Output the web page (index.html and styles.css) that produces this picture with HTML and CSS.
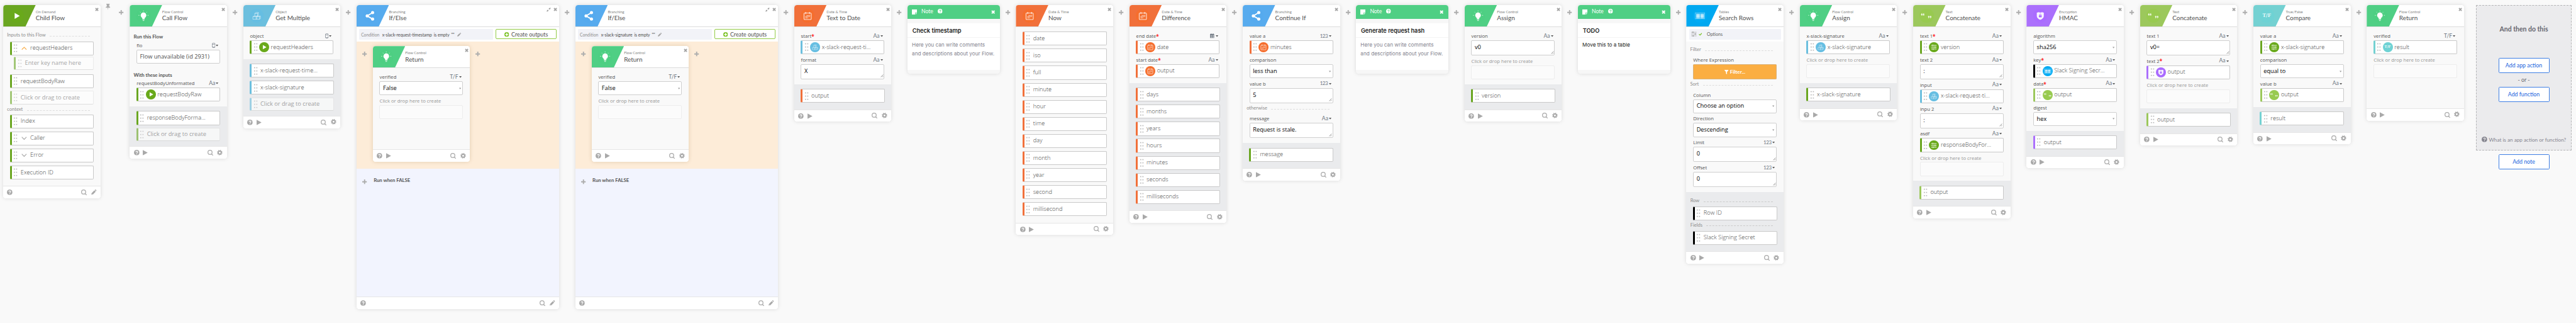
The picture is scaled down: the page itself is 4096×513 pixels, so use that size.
FILE: index.html
```html
<!DOCTYPE html>
<html lang="en">
<head>
<meta charset="utf-8">
<title>Flow editor</title>
<link rel="stylesheet" href="styles.css">
</head>
<body>
<svg class="defs" aria-hidden="true">
  <symbol id="x" viewBox="0 0 10 10"><path d="M1.600 1.600l6.800 6.800M8.400 1.600l-6.800 6.800" stroke="currentColor" stroke-width="3"/></symbol>
  <symbol id="plus" viewBox="0 0 11 11"><path d="M5.500 0v11M0 5.500h11" stroke="currentColor" stroke-width="2.800"/></symbol>
  <symbol id="pin" viewBox="0 0 11 15"><path d="M1.500 0h8v1.600L8.300 2.300v4c1.500.6 2.500 1.600 2.600 3H.1c.1-1.400 1.100-2.400 2.600-3v-4L1.500 1.600zM4.800 9h1.400l-.7 6z" fill="currentColor"/></symbol>
  <symbol id="q" viewBox="0 0 13 13"><circle cx="6.500" cy="6.500" r="6.500" fill="currentColor"/><path d="M4.500 5.200c0-2.800 4.300-2.600 4.200-.1 0 1.400-2.100 1.500-2.100 2.900M6.600 9.100v1.700" fill="none" stroke="var(--mark,#fff)" stroke-width="1.700"/></symbol>
  <symbol id="run" viewBox="0 0 12 13"><path d="M0 0l12 6.500L0 13z" fill="currentColor"/></symbol>
  <symbol id="search" viewBox="0 0 14 14"><g fill="none" stroke="currentColor" stroke-width="1.900"><circle cx="6" cy="6" r="5"/><path d="M9.600 9.800l3.700 3.600"/></g></symbol>
  <symbol id="gear" viewBox="0 0 13 13"><g fill="none" stroke="currentColor"><circle cx="6.500" cy="6.500" r="5.300" stroke-width="2.400" stroke-dasharray="2.082 2.082"/><circle cx="6.500" cy="6.500" r="3.500" stroke-width="2.700"/></g></symbol>
  <symbol id="pencil" viewBox="0 0 13 13"><path d="M0 13l.8-3.900 7-7 3.100 3.100-7 7zM8.600 1.300L9.900 0c.3-.2.700-.2 1 0L13 2.100c.2.300.2.700 0 1l-1.300 1.300z" fill="currentColor"/><circle cx="1.900" cy="11.100" r=".8" fill="#fff"/></symbol>
  <symbol id="compress" viewBox="0 0 12 12"><path d="M6.600 1.300l1 1L10.300 0 12 1.700 9.700 4.400l1 1H6.600zM5.400 10.700l-1-1L1.700 12 0 10.300l2.300-2.700-1-1h4.100z" fill="currentColor"/></symbol>
  <symbol id="db" viewBox="0 0 8 12"><g fill="none" stroke="currentColor" stroke-width="1"><path d="M.6 2.200v7.600c0 2.100 6.800 2.100 6.800 0V2.200"/><ellipse cx="4" cy="2.200" rx="3.400" ry="1.500"/><path d="M.6 9c0 1.500 6.800 1.500 6.800 0"/></g></symbol>
  <symbol id="cal" viewBox="0 0 10 11"><path d="M0 2h10v9H0z" fill="currentColor"/><path d="M1 5.200h8M1 7.200h8M1 9.200h8" stroke="#fff" stroke-width="1.100" stroke-dasharray="1.400 .8"/><path d="M2.700 0v3M7.300 0v3" stroke="currentColor" stroke-width="1.500"/></symbol>
  <symbol id="down" viewBox="0 0 6 4"><path d="M0 0h6L3 4z" fill="currentColor"/></symbol>
  <symbol id="grip" viewBox="0 0 7 7"><path d="M.5 6.800L6.800.5M4 6.800l2.800-2.800" stroke="currentColor" stroke-width=".9"/></symbol>
  <symbol id="chev-up" viewBox="0 0 13 8"><path d="M1 7l5.500-5.500L12 7" fill="none" stroke="currentColor" stroke-width="1.700"/></symbol>
  <symbol id="chev-down" viewBox="0 0 13 8"><path d="M1 1l5.500 5.500L12 1" fill="none" stroke="currentColor" stroke-width="1.700"/></symbol>
  <symbol id="create" viewBox="0 0 11 11"><circle cx="5.500" cy="5.500" r="5.500" fill="currentColor"/><path d="M5.500 2.300v6.400M2.300 5.500h6.400" stroke="#fff" stroke-width="2"/></symbol>
  <symbol id="options" viewBox="0 0 13 12"><path d="M0 1.800h13M0 6h13M0 10.200h13" stroke="currentColor" stroke-width="1"/><path d="M3 .3h2.500v3H3zM8.500 4.500H11v3H8.500zM3.500 8.700H6v3H3.500z" fill="currentColor"/></symbol>
  <symbol id="check" viewBox="0 0 8 7"><path d="M.8 3.400l2.300 2.300L7.300 1.200" fill="none" stroke="currentColor" stroke-width="1.900"/></symbol>
  <symbol id="funnel" viewBox="0 0 10 11"><path d="M0 0h10v.8L6.300 5v6L3.700 9V5L0 .8z" fill="currentColor"/></symbol>
  <symbol id="sheet" viewBox="0 0 12 12"><path d="M0 0h12v7.500H7.500V12H0z" fill="currentColor"/><path d="M8.600 8.600H12L8.600 12z" fill="currentColor"/></symbol>
  <symbol id="a-play" viewBox="0 0 33 33"><path d="M12.300 9.500l12 7-12 7z" fill="#fff"/></symbol>
  <symbol id="a-bulb" viewBox="0 0 33 33"><circle cx="16.500" cy="15.200" r="6.600" fill="#fff"/><path d="M13.600 20.500h5.800V24h-5.800z" fill="#fff"/><path d="M14 25.500h5M14.800 27.600h3.400M16.500 4.200V6M8.500 7.200l1.300 1.300M24.500 7.200l-1.300 1.300M4.800 15.200h2M26.200 15.200h2" stroke="#fff" stroke-width="1.100"/></symbol>
  <symbol id="a-cubes" viewBox="0 0 33 33"><g fill="none" stroke="#fff" stroke-opacity=".65" stroke-width="1.100" stroke-linejoin="round"><path d="M12 11h6.500v6H12zM12 11l2-2.300h6.500l-2 2.300M20.500 8.700v6l-2 2.300M7.500 18.500H15v6H7.500zM7.500 18.500l2-1.500h2.500M15 18.500l2-1.500v6l-2 1.500M17 18.500h6v6h-8M17 17h8l-2 1.500M25.300 17v6l-2.300 1.500"/></g></symbol>
  <symbol id="a-share" viewBox="0 0 33 33"><path d="M23 8.800L10 16.500l13 7.700" fill="none" stroke="#fff" stroke-width="2.700"/><g fill="#fff"><circle cx="10.200" cy="16.500" r="3.700"/><circle cx="22.800" cy="8.900" r="3.700"/><circle cx="22.800" cy="24.100" r="3.700"/></g></symbol>
  <symbol id="a-date" viewBox="0 0 33 33"><g fill="none" stroke="#fff" stroke-opacity=".8" stroke-width="1.600"><rect x="8" y="10" width="17" height="15" rx="1.500"/><path d="M12 7.500V12M21 7.500V12"/><path d="M14 15.500h8.500M11 18.300h11M11 21.200h6" stroke-dasharray="1.700 .7"/></g></symbol>
  <symbol id="a-table" viewBox="0 0 33 33"><rect x="5.500" y="9.500" width="22" height="14" fill="none" stroke="#fff" stroke-opacity=".6" stroke-width=".9"/><path d="M7.500 12.800H16M17.200 12.800h8.500M7.500 15.600H16M17.200 15.600h8.500M7.500 18.400H16M17.200 18.400h8.500M7.500 21.200H16M17.200 21.200h8.500" stroke="#fff" stroke-width="1.900"/></symbol>
  <symbol id="a-quotes" viewBox="0 0 33 33"><g fill="#fff" fill-opacity=".9"><circle cx="5.700" cy="14" r="1.700"/><circle cx="10" cy="14" r="1.700"/><path d="M4 14c0-2 1-3.400 2.800-3.900l.2.700c-1 .5-1.400 1.200-1.400 2.200zM8.300 14c0-2 1-3.400 2.800-3.900l.2.700c-1 .5-1.400 1.200-1.400 2.200z"/><circle cx="21.800" cy="18.300" r="1.700"/><circle cx="26.200" cy="18.300" r="1.700"/><path d="M23.500 18.300c0 2-1 3.400-2.800 3.900l-.2-.7c1-.5 1.400-1.200 1.400-2.200zM27.900 18.300c0 2-1 3.400-2.800 3.900l-.2-.7c1-.5 1.400-1.200 1.400-2.200z"/></g></symbol>
  <symbol id="a-shield" viewBox="0 0 33 33"><path d="M8.300 9c1.800 0 2.800-.6 3.800-1.300 2.700 1.600 6.100 1.600 8.800 0 1 .7 2 1.300 3.800 1.300v8c0 4.300-3.400 7-8.200 8.700-4.800-1.700-8.200-4.400-8.200-8.700z" fill="#fff" fill-opacity=".93"/><rect x="13.200" y="15" width="6.600" height="5" rx=".6" fill="#ab6cff"/><path d="M14.700 15v-1.300c0-2.300 3.600-2.300 3.600 0V15" fill="none" stroke="#ab6cff" stroke-width="1.200"/></symbol>
  <symbol id="a-sliders" viewBox="0 0 33 33"><path d="M7.500 10.500h18M7.500 16.500h18M7.500 22.500h18" stroke="#fff" stroke-width="1.800"/><g fill="#69a90f" stroke="#fff" stroke-width="1.300"><circle cx="13" cy="10.500" r="2"/><circle cx="20.500" cy="16.500" r="2"/><circle cx="14" cy="22.500" r="2"/></g></symbol>
</svg>

<main class="flow">

  <section class="card green">
    <header class="head"><div class="badge"><svg class="app"><use href="#a-play"/></svg></div><div class="titles"><small>On Demand</small><h2>Child Flow</h2></div><div class="tools"><svg class="x"><use href="#x"/></svg></div></header>
    <div class="body inputs">
      <div class="sec">Inputs to this Flow</div>
      <div class="items">
        <div class="item green"><i class="dots"></i><svg class="chev amber"><use href="#chev-up"/></svg><span>requestHeaders</span></div>
        <div class="item ghost nested green"><i class="dots"></i><span>Enter key name here</span></div>
        <div class="item green"><i class="dots"></i><span>requestBodyRaw</span></div>
        <div class="item ghost green"><i class="dots"></i><span>Click or drag to create</span></div>
      </div>
      <div class="sec">context</div>
      <div class="items">
        <div class="item green"><i class="dots"></i><span>Index</span></div>
        <div class="item green"><i class="dots"></i><svg class="chev"><use href="#chev-down"/></svg><span>Caller</span></div>
        <div class="item green"><i class="dots"></i><svg class="chev"><use href="#chev-down"/></svg><span>Error</span></div>
        <div class="item green"><i class="dots"></i><span>Execution ID</span></div>
      </div>
    </div>
    <footer class="foot"><svg class="q"><use href="#q"/></svg><svg class="search"><use href="#search"/></svg><svg class="pencil"><use href="#pencil"/></svg></footer>
  </section>

  <div class="add first"><svg class="pin"><use href="#pin"/></svg><svg class="plus"><use href="#plus"/></svg></div>

  <section class="card flowc">
    <header class="head"><div class="badge"><svg class="app"><use href="#a-bulb"/></svg></div><div class="titles"><small>Flow Control</small><h2>Call Flow</h2></div><div class="tools"><svg class="x"><use href="#x"/></svg></div></header>
    <div class="body call">
      <h3>Run this Flow</h3>
      <div class="label">flo<span class="type"><svg class="db"><use href="#db"/></svg><svg class="down"><use href="#down"/></svg></span></div>
      <div class="box soft">Flow unavailable (id 2931)</div>
      <h3 class="second">With these inputs</h3>
      <div class="label">requestBodyUnformatted<span class="type">Aa<svg class="down"><use href="#down"/></svg></span></div>
      <div class="item green"><i class="dots"></i><svg class="chip"><use href="#a-play"/></svg><span>requestBodyRaw</span></div>
    </div>
    <div class="outs"><div class="items">
      <div class="item green"><i class="dots"></i><span>responseBodyForma...</span></div>
      <div class="item ghost green"><i class="dots"></i><span>Click or drag to create</span></div>
    </div></div>
    <footer class="foot"><svg class="q"><use href="#q"/></svg><svg class="run"><use href="#run"/></svg><svg class="search"><use href="#search"/></svg><svg class="gear"><use href="#gear"/></svg></footer>
  </section>

  <div class="add"><svg class="plus"><use href="#plus"/></svg></div>

  <section class="card object">
    <header class="head"><div class="badge"><svg class="app"><use href="#a-cubes"/></svg></div><div class="titles"><small>Object</small><h2>Get Multiple</h2></div><div class="tools"><svg class="x"><use href="#x"/></svg></div></header>
    <div class="body">
      <div class="label">object<span class="type"><svg class="db"><use href="#db"/></svg><svg class="down"><use href="#down"/></svg></span></div>
      <div class="item green"><i class="dots"></i><svg class="chip"><use href="#a-play"/></svg><span>requestHeaders</span></div>
    </div>
    <div class="outs"><div class="items">
      <div class="item object"><i class="dots"></i><span>x-slack-request-time...</span></div>
      <div class="item object"><i class="dots"></i><span>x-slack-signature</span></div>
      <div class="item ghost object"><i class="dots"></i><span>Click or drag to create</span></div>
    </div></div>
    <footer class="foot"><svg class="q"><use href="#q"/></svg><svg class="run"><use href="#run"/></svg><svg class="search"><use href="#search"/></svg><svg class="gear"><use href="#gear"/></svg></footer>
  </section>

  <div class="add"><svg class="plus"><use href="#plus"/></svg></div>

  <section class="card wide branch">
    <header class="head"><div class="badge"><svg class="app"><use href="#a-share"/></svg></div><div class="titles"><small>Branching</small><h2>If/Else</h2></div><div class="tools"><svg class="compress"><use href="#compress"/></svg><svg class="x"><use href="#x"/></svg></div></header>
    <div class="cond"><div class="rule"><em>Condition</em><b>x-slack-request-timestamp</b><b>is empty</b><b>""</b><svg class="edit"><use href="#pencil"/></svg></div><button class="create"><svg class="create-icon"><use href="#create"/></svg>Create outputs</button></div>
    <div class="lane when-true">
      <div class="add"><svg class="plus"><use href="#plus"/></svg></div>
      <section class="card flowc">
        <header class="head"><div class="badge"><svg class="app"><use href="#a-bulb"/></svg></div><div class="titles"><small>Flow Control</small><h2>Return</h2></div><div class="tools"><svg class="x"><use href="#x"/></svg></div></header>
        <div class="body tall">
          <div class="label">verified<span class="type">T/F<svg class="down"><use href="#down"/></svg></span></div>
          <div class="box select">False<svg class="down"><use href="#down"/></svg></div>
          <div class="label faint">Click or drop here to create</div>
          <div class="box empty"></div>
        </div>
        <footer class="foot"><svg class="q"><use href="#q"/></svg><svg class="run"><use href="#run"/></svg><svg class="search"><use href="#search"/></svg><svg class="gear"><use href="#gear"/></svg></footer>
      </section>
      <div class="add"><svg class="plus"><use href="#plus"/></svg></div>
    </div>
    <div class="lane when-false"><div class="add"><svg class="plus"><use href="#plus"/></svg></div><h3>Run when FALSE</h3></div>
    <footer class="foot"><svg class="q"><use href="#q"/></svg><svg class="search"><use href="#search"/></svg><svg class="pencil"><use href="#pencil"/></svg></footer>
  </section>

  <div class="add"><svg class="plus"><use href="#plus"/></svg></div>

  <section class="card wide branch">
    <header class="head"><div class="badge"><svg class="app"><use href="#a-share"/></svg></div><div class="titles"><small>Branching</small><h2>If/Else</h2></div><div class="tools"><svg class="compress"><use href="#compress"/></svg><svg class="x"><use href="#x"/></svg></div></header>
    <div class="cond"><div class="rule"><em>Condition</em><b>x-slack-signature</b><b>is empty</b><b>""</b><svg class="edit"><use href="#pencil"/></svg></div><button class="create"><svg class="create-icon"><use href="#create"/></svg>Create outputs</button></div>
    <div class="lane when-true">
      <div class="add"><svg class="plus"><use href="#plus"/></svg></div>
      <section class="card flowc">
        <header class="head"><div class="badge"><svg class="app"><use href="#a-bulb"/></svg></div><div class="titles"><small>Flow Control</small><h2>Return</h2></div><div class="tools"><svg class="x"><use href="#x"/></svg></div></header>
        <div class="body tall">
          <div class="label">verified<span class="type">T/F<svg class="down"><use href="#down"/></svg></span></div>
          <div class="box select">False<svg class="down"><use href="#down"/></svg></div>
          <div class="label faint">Click or drop here to create</div>
          <div class="box empty"></div>
        </div>
        <footer class="foot"><svg class="q"><use href="#q"/></svg><svg class="run"><use href="#run"/></svg><svg class="search"><use href="#search"/></svg><svg class="gear"><use href="#gear"/></svg></footer>
      </section>
      <div class="add"><svg class="plus"><use href="#plus"/></svg></div>
    </div>
    <div class="lane when-false"><div class="add"><svg class="plus"><use href="#plus"/></svg></div><h3>Run when FALSE</h3></div>
    <footer class="foot"><svg class="q"><use href="#q"/></svg><svg class="search"><use href="#search"/></svg><svg class="pencil"><use href="#pencil"/></svg></footer>
  </section>

  <div class="add"><svg class="plus"><use href="#plus"/></svg></div>

  <section class="card date">
    <header class="head"><div class="badge"><svg class="app"><use href="#a-date"/></svg></div><div class="titles"><small>Date &amp; Time</small><h2>Text to Date</h2></div><div class="tools"><svg class="x"><use href="#x"/></svg></div></header>
    <div class="body">
      <div class="label">start<sup>*</sup><span class="type">Aa<svg class="down"><use href="#down"/></svg></span></div>
      <div class="item object"><i class="dots"></i><svg class="chip"><use href="#a-cubes"/></svg><span>x-slack-request-ti...</span></div>
      <div class="label">format<span class="type">Aa<svg class="down"><use href="#down"/></svg></span></div>
      <div class="box area">X<svg class="grip"><use href="#grip"/></svg></div>
    </div>
    <div class="outs"><div class="items"><div class="item date"><i class="dots"></i><span>output</span></div></div></div>
    <footer class="foot"><svg class="q"><use href="#q"/></svg><svg class="run"><use href="#run"/></svg><svg class="search"><use href="#search"/></svg><svg class="gear"><use href="#gear"/></svg></footer>
  </section>

  <div class="add"><svg class="plus"><use href="#plus"/></svg></div>

  <section class="card note">
    <header class="note-head"><svg class="sheet"><use href="#sheet"/></svg><span>Note</span><svg class="q"><use href="#q"/></svg><svg class="x"><use href="#x"/></svg></header>
    <h4>Check timestamp</h4>
    <p class="hint">Here you can write comments<br>and descriptions about your Flow.</p>
  </section>

  <div class="add"><svg class="plus"><use href="#plus"/></svg></div>

  <section class="card date">
    <header class="head"><div class="badge"><svg class="app"><use href="#a-date"/></svg></div><div class="titles"><small>Date &amp; Time</small><h2>Now</h2></div><div class="tools"><svg class="x"><use href="#x"/></svg></div></header>
    <div class="outs plain"><div class="items">
      <div class="item date"><i class="dots"></i><span>date</span></div>
      <div class="item date"><i class="dots"></i><span>iso</span></div>
      <div class="item date"><i class="dots"></i><span>full</span></div>
      <div class="item date"><i class="dots"></i><span>minute</span></div>
      <div class="item date"><i class="dots"></i><span>hour</span></div>
      <div class="item date"><i class="dots"></i><span>time</span></div>
      <div class="item date"><i class="dots"></i><span>day</span></div>
      <div class="item date"><i class="dots"></i><span>month</span></div>
      <div class="item date"><i class="dots"></i><span>year</span></div>
      <div class="item date"><i class="dots"></i><span>second</span></div>
      <div class="item date"><i class="dots"></i><span>millisecond</span></div>
    </div></div>
    <footer class="foot"><svg class="q"><use href="#q"/></svg><svg class="run"><use href="#run"/></svg><svg class="search"><use href="#search"/></svg><svg class="gear"><use href="#gear"/></svg></footer>
  </section>

  <div class="add"><svg class="plus"><use href="#plus"/></svg></div>

  <section class="card date">
    <header class="head"><div class="badge"><svg class="app"><use href="#a-date"/></svg></div><div class="titles"><small>Date &amp; Time</small><h2>Difference</h2></div><div class="tools"><svg class="x"><use href="#x"/></svg></div></header>
    <div class="body">
      <div class="label">end date<sup>*</sup><span class="type"><svg class="cal"><use href="#cal"/></svg><svg class="down"><use href="#down"/></svg></span></div>
      <div class="item date"><i class="dots"></i><svg class="chip"><use href="#a-date"/></svg><span>date</span></div>
      <div class="label">start date<sup>*</sup><span class="type">Aa<svg class="down"><use href="#down"/></svg></span></div>
      <div class="item date"><i class="dots"></i><svg class="chip"><use href="#a-date"/></svg><span>output</span></div>
    </div>
    <div class="outs"><div class="items">
      <div class="item date"><i class="dots"></i><span>days</span></div>
      <div class="item date"><i class="dots"></i><span>months</span></div>
      <div class="item date"><i class="dots"></i><span>years</span></div>
      <div class="item date"><i class="dots"></i><span>hours</span></div>
      <div class="item date"><i class="dots"></i><span>minutes</span></div>
      <div class="item date"><i class="dots"></i><span>seconds</span></div>
      <div class="item date"><i class="dots"></i><span>milliseconds</span></div>
    </div></div>
    <footer class="foot"><svg class="q"><use href="#q"/></svg><svg class="run"><use href="#run"/></svg><svg class="search"><use href="#search"/></svg><svg class="gear"><use href="#gear"/></svg></footer>
  </section>

  <div class="add"><svg class="plus"><use href="#plus"/></svg></div>

  <section class="card branch">
    <header class="head"><div class="badge"><svg class="app"><use href="#a-share"/></svg></div><div class="titles"><small>Branching</small><h2>Continue If</h2></div><div class="tools"><svg class="x"><use href="#x"/></svg></div></header>
    <div class="body">
      <div class="label">value a<span class="type num">123<svg class="down"><use href="#down"/></svg></span></div>
      <div class="item date"><i class="dots"></i><svg class="chip"><use href="#a-date"/></svg><span>minutes</span></div>
      <div class="label">comparison</div>
      <div class="box select">less than<svg class="down"><use href="#down"/></svg></div>
      <div class="label">value b<span class="type num">123<svg class="down"><use href="#down"/></svg></span></div>
      <div class="box area">5<svg class="grip"><use href="#grip"/></svg></div>
      <div class="sec">otherwise</div>
      <div class="label">message<span class="type">Aa<svg class="down"><use href="#down"/></svg></span></div>
      <div class="box area">Request is stale.<svg class="grip"><use href="#grip"/></svg></div>
    </div>
    <div class="outs"><div class="items"><div class="item green"><i class="dots"></i><span>message</span></div></div></div>
    <footer class="foot"><svg class="q"><use href="#q"/></svg><svg class="run"><use href="#run"/></svg><svg class="search"><use href="#search"/></svg><svg class="gear"><use href="#gear"/></svg></footer>
  </section>

  <div class="add"><svg class="plus"><use href="#plus"/></svg></div>

  <section class="card note">
    <header class="note-head"><svg class="sheet"><use href="#sheet"/></svg><span>Note</span><svg class="q"><use href="#q"/></svg><svg class="x"><use href="#x"/></svg></header>
    <h4>Generate request hash</h4>
    <p class="hint">Here you can write comments<br>and descriptions about your Flow.</p>
  </section>

  <div class="add"><svg class="plus"><use href="#plus"/></svg></div>

  <section class="card flowc">
    <header class="head"><div class="badge"><svg class="app"><use href="#a-bulb"/></svg></div><div class="titles"><small>Flow Control</small><h2>Assign</h2></div><div class="tools"><svg class="x"><use href="#x"/></svg></div></header>
    <div class="body">
      <div class="label">version<span class="type">Aa<svg class="down"><use href="#down"/></svg></span></div>
      <div class="box area">v0<svg class="grip"><use href="#grip"/></svg></div>
      <div class="label faint">Click or drop here to create</div>
      <div class="box empty"></div>
    </div>
    <div class="outs"><div class="items"><div class="item green"><i class="dots"></i><span>version</span></div></div></div>
    <footer class="foot"><svg class="q"><use href="#q"/></svg><svg class="run"><use href="#run"/></svg><svg class="search"><use href="#search"/></svg><svg class="gear"><use href="#gear"/></svg></footer>
  </section>

  <div class="add"><svg class="plus"><use href="#plus"/></svg></div>

  <section class="card note">
    <header class="note-head"><svg class="sheet"><use href="#sheet"/></svg><span>Note</span><svg class="q"><use href="#q"/></svg><svg class="x"><use href="#x"/></svg></header>
    <h4>TODO</h4>
    <p>Move this to a table</p>
  </section>

  <div class="add"><svg class="plus"><use href="#plus"/></svg></div>

  <section class="card tables">
    <header class="head"><div class="badge"><svg class="app"><use href="#a-table"/></svg></div><div class="titles"><small>Tables</small><h2>Search Rows</h2></div><div class="tools"><svg class="x"><use href="#x"/></svg></div></header>
    <div class="cond"><div class="rule options"><svg class="opt"><use href="#options"/></svg><svg class="check"><use href="#check"/></svg>Options</div></div>
    <div class="body">
      <div class="sec">Filter</div>
      <div class="label">Where Expression</div>
      <button class="filter"><svg class="funnel"><use href="#funnel"/></svg>Filter...</button>
      <div class="sec">Sort</div>
      <div class="label">Column</div>
      <div class="box select">Choose an option<svg class="down"><use href="#down"/></svg></div>
      <div class="label">Direction</div>
      <div class="box select">Descending<svg class="down"><use href="#down"/></svg></div>
      <div class="label">Limit<span class="type num">123<svg class="down"><use href="#down"/></svg></span></div>
      <div class="box area">0<svg class="grip"><use href="#grip"/></svg></div>
      <div class="label">Offset<span class="type num">123<svg class="down"><use href="#down"/></svg></span></div>
      <div class="box area">0<svg class="grip"><use href="#grip"/></svg></div>
    </div>
    <div class="outs grouped">
      <div class="sec">Row</div>
      <div class="item black"><i class="dots"></i><span>Row ID</span></div>
      <div class="sec">Fields</div>
      <div class="item black"><i class="dots"></i><span>Slack Signing Secret</span></div>
    </div>
    <footer class="foot"><svg class="q"><use href="#q"/></svg><svg class="run"><use href="#run"/></svg><svg class="search"><use href="#search"/></svg><svg class="gear"><use href="#gear"/></svg></footer>
  </section>

  <div class="add"><svg class="plus"><use href="#plus"/></svg></div>

  <section class="card flowc">
    <header class="head"><div class="badge"><svg class="app"><use href="#a-bulb"/></svg></div><div class="titles"><small>Flow Control</small><h2>Assign</h2></div><div class="tools"><svg class="x"><use href="#x"/></svg></div></header>
    <div class="body">
      <div class="label">x-slack-signature<span class="type">Aa<svg class="down"><use href="#down"/></svg></span></div>
      <div class="item object"><i class="dots"></i><svg class="chip"><use href="#a-cubes"/></svg><span>x-slack-signature</span></div>
      <div class="label faint">Click or drop here to create</div>
      <div class="box empty"></div>
    </div>
    <div class="outs"><div class="items"><div class="item green"><i class="dots"></i><span>x-slack-signature</span></div></div></div>
    <footer class="foot"><svg class="q"><use href="#q"/></svg><svg class="run"><use href="#run"/></svg><svg class="search"><use href="#search"/></svg><svg class="gear"><use href="#gear"/></svg></footer>
  </section>

  <div class="add"><svg class="plus"><use href="#plus"/></svg></div>

  <section class="card text">
    <header class="head"><div class="badge"><svg class="app"><use href="#a-quotes"/></svg></div><div class="titles"><small>Text</small><h2>Concatenate</h2></div><div class="tools"><svg class="x"><use href="#x"/></svg></div></header>
    <div class="body">
      <div class="label">text 1<sup>*</sup><span class="type">Aa<svg class="down"><use href="#down"/></svg></span></div>
      <div class="item green"><i class="dots"></i><svg class="chip"><use href="#a-sliders"/></svg><span>version</span></div>
      <div class="label">text 2<span class="type">Aa<svg class="down"><use href="#down"/></svg></span></div>
      <div class="box area">:<svg class="grip"><use href="#grip"/></svg></div>
      <div class="label">input<span class="type">Aa<svg class="down"><use href="#down"/></svg></span></div>
      <div class="item object"><i class="dots"></i><svg class="chip"><use href="#a-cubes"/></svg><span>x-slack-request-ti...</span></div>
      <div class="label">inpu 2<span class="type">Aa<svg class="down"><use href="#down"/></svg></span></div>
      <div class="box area">:<svg class="grip"><use href="#grip"/></svg></div>
      <div class="label">asdf<span class="type">Aa<svg class="down"><use href="#down"/></svg></span></div>
      <div class="item green"><i class="dots"></i><svg class="chip"><use href="#a-sliders"/></svg><span>responseBodyFor...</span></div>
      <div class="label faint">Click or drop here to create</div>
      <div class="box empty"></div>
    </div>
    <div class="outs"><div class="items"><div class="item text"><i class="dots"></i><span>output</span></div></div></div>
    <footer class="foot"><svg class="q"><use href="#q"/></svg><svg class="run"><use href="#run"/></svg><svg class="search"><use href="#search"/></svg><svg class="gear"><use href="#gear"/></svg></footer>
  </section>

  <div class="add"><svg class="plus"><use href="#plus"/></svg></div>

  <section class="card crypt">
    <header class="head"><div class="badge"><svg class="app"><use href="#a-shield"/></svg></div><div class="titles"><small>Encryption</small><h2>HMAC</h2></div><div class="tools"><svg class="x"><use href="#x"/></svg></div></header>
    <div class="body">
      <div class="label">algorithm</div>
      <div class="box select">sha256<svg class="down"><use href="#down"/></svg></div>
      <div class="label">key<sup>*</sup><span class="type">Aa<svg class="down"><use href="#down"/></svg></span></div>
      <div class="item black"><i class="dots"></i><svg class="chip tables"><use href="#a-table"/></svg><span>Slack Signing Secr...</span></div>
      <div class="label">data<sup>*</sup><span class="type">Aa<svg class="down"><use href="#down"/></svg></span></div>
      <div class="item text"><i class="dots"></i><svg class="chip"><use href="#a-quotes"/></svg><span>output</span></div>
      <div class="label">digest</div>
      <div class="box select">hex<svg class="down"><use href="#down"/></svg></div>
    </div>
    <div class="outs"><div class="items"><div class="item crypt"><i class="dots"></i><span>output</span></div></div></div>
    <footer class="foot"><svg class="q"><use href="#q"/></svg><svg class="run"><use href="#run"/></svg><svg class="search"><use href="#search"/></svg><svg class="gear"><use href="#gear"/></svg></footer>
  </section>

  <div class="add"><svg class="plus"><use href="#plus"/></svg></div>

  <section class="card text">
    <header class="head"><div class="badge"><svg class="app"><use href="#a-quotes"/></svg></div><div class="titles"><small>Text</small><h2>Concatenate</h2></div><div class="tools"><svg class="x"><use href="#x"/></svg></div></header>
    <div class="body">
      <div class="label">text 1<span class="type">Aa<svg class="down"><use href="#down"/></svg></span></div>
      <div class="box area">v0=<svg class="grip"><use href="#grip"/></svg></div>
      <div class="label">text 2<sup>*</sup><span class="type">Aa<svg class="down"><use href="#down"/></svg></span></div>
      <div class="item crypt"><i class="dots"></i><svg class="chip"><use href="#a-shield"/></svg><span>output</span></div>
      <div class="label faint">Click or drop here to create</div>
      <div class="box empty"></div>
    </div>
    <div class="outs"><div class="items"><div class="item text"><i class="dots"></i><span>output</span></div></div></div>
    <footer class="foot"><svg class="q"><use href="#q"/></svg><svg class="run"><use href="#run"/></svg><svg class="search"><use href="#search"/></svg><svg class="gear"><use href="#gear"/></svg></footer>
  </section>

  <div class="add"><svg class="plus"><use href="#plus"/></svg></div>

  <section class="card bool">
    <header class="head"><div class="badge"><span class="app tf">T/F</span></div><div class="titles"><small>True/False</small><h2>Compare</h2></div><div class="tools"><svg class="x"><use href="#x"/></svg></div></header>
    <div class="body">
      <div class="label">value a<span class="type">Aa<svg class="down"><use href="#down"/></svg></span></div>
      <div class="item green"><i class="dots"></i><svg class="chip"><use href="#a-sliders"/></svg><span>x-slack-signature</span></div>
      <div class="label">comparison</div>
      <div class="box select">equal to<svg class="down"><use href="#down"/></svg></div>
      <div class="label">value b<span class="type">Aa<svg class="down"><use href="#down"/></svg></span></div>
      <div class="item text"><i class="dots"></i><svg class="chip"><use href="#a-quotes"/></svg><span>output</span></div>
    </div>
    <div class="outs"><div class="items"><div class="item bool"><i class="dots"></i><span>result</span></div></div></div>
    <footer class="foot"><svg class="q"><use href="#q"/></svg><svg class="run"><use href="#run"/></svg><svg class="search"><use href="#search"/></svg><svg class="gear"><use href="#gear"/></svg></footer>
  </section>

  <div class="add"><svg class="plus"><use href="#plus"/></svg></div>

  <section class="card flowc">
    <header class="head"><div class="badge"><svg class="app"><use href="#a-bulb"/></svg></div><div class="titles"><small>Flow Control</small><h2>Return</h2></div><div class="tools"><svg class="x"><use href="#x"/></svg></div></header>
    <div class="body tall">
      <div class="label">verified<span class="type">T/F<svg class="down"><use href="#down"/></svg></span></div>
      <div class="item bool"><i class="dots"></i><span class="chip tf">T/F</span><span>result</span></div>
      <div class="label faint">Click or drop here to create</div>
      <div class="box empty"></div>
    </div>
    <footer class="foot"><svg class="q"><use href="#q"/></svg><svg class="run"><use href="#run"/></svg><svg class="search"><use href="#search"/></svg><svg class="gear"><use href="#gear"/></svg></footer>
  </section>

  <aside class="next">
    <div class="drop">
      <h5>And then do this</h5>
      <button class="cta">Add app action</button>
      <span class="or">- or -</span>
      <button class="cta">Add function</button>
      <a class="help"><svg class="q"><use href="#q"/></svg>What is an app action or function?</a>
    </div>
    <button class="cta">Add note</button>
  </aside>

</main>
</body>
</html>
```
FILE: styles.css
```css
* { box-sizing: border-box; margin: 0; padding: 0; }
html { font-size: 6.7792px; }
body { width: 4096px; height: 513px; overflow: hidden; background: #f9f9f9; color: #5e5e5e; font-family: Lato, sans-serif; }
svg { display: block; flex: none; overflow: visible; }
button { font: inherit; cursor: pointer; }
h2, h3, h4, h5, small, em, b { font-style: normal; font-weight: 400; white-space: nowrap; }
.defs { position: absolute; width: 0; height: 0; }

/* app palette: --c is the solid colour, --k the icon disc */
.green { --c: #6aa621; --k: #69a91b; }
.flowc { --c: #4fcf84; --k: #4dcf82; }
.object { --c: #6cbfde; --k: #66bee2; }
.branch { --c: #57abee; --k: #55aaee; }
.date { --c: #f1703a; --k: #f56e2d; }
.tables { --c: #00a8f0; --k: #00abf4; }
.text { --c: #9cc85c; --k: #98ca50; }
.crypt { --c: #ab70fc; --k: #aa6bff; }
.bool { --c: #74d1d2; --k: #6ed2d4; }
.black { --c: #000; --k: #000; }

.flow { display: flex; align-items: flex-start; padding: 1.17rem 0 0 .77rem; }
.add { flex: none; width: 3.8rem; padding-top: 1.25rem; display: flex; justify-content: center; color: #adadad; }
.plus { width: 1.1rem; height: 1.1rem; }
.add.first { width: 6.87rem; justify-content: flex-start; }
.pin { width: 1.1rem; height: 1.5rem; margin: -1.55rem 2.05rem 0 1.17rem; }

.card { flex: none; width: 22.8rem; background: #fff; border-radius: .65rem; overflow: hidden; box-shadow: 0 0 1rem rgba(0, 0, 0, .13); }
.card.wide { width: 47.52rem; }
.head { height: 5.2rem; display: flex; background: #fff; border-bottom: 1px solid #dcdcdc; }
.badge { width: 7.6rem; background: var(--c); clip-path: polygon(0 0, 100% 0, 68.5% 100%, 0 100%); padding: .9rem 0 0 1.5rem; }
.app { width: 3.3rem; height: 3.3rem; border-radius: 50%; background: var(--k); }
.tf { display: grid; place-items: center; color: rgba(255, 255, 255, .85); font: 700 1.1rem/1 "DejaVu Serif", serif; }
.titles { padding-top: 1.12rem; }
.titles small { display: block; font-size: .88rem; line-height: 1rem; color: #868686; }
.titles h2 { font-size: 1.47rem; line-height: 1.8rem; color: #505050; }
.tools { margin-left: auto; padding: .55rem .38rem 0 0; display: flex; gap: .7rem; color: #a2a2a2; }
.x { width: .9rem; height: .9rem; }
.compress { width: 1rem; height: 1rem; }

.body { background: #f9f9f9; padding: .73rem 1.6rem 1.16rem 1.55rem; }
.body.tall { min-height: 19rem; }
.label { height: 2.33rem; padding: .4rem .4rem 0 .05rem; display: flex; align-items: center; font: 1.135rem/1.9rem "Open Sans", sans-serif; color: #545454; white-space: nowrap; }
.label.faint { color: #969696; padding-top: .45rem; }
.label sup { color: #f22; font-size: 1.2rem; font-weight: 700; line-height: 1; height: 1.1rem; }
.type { margin-left: auto; display: flex; align-items: center; gap: .15rem; font: 1.26rem/1.9rem Lato, sans-serif; color: #6c757f; padding-bottom: .1rem; }
.type.num { font-size: 1.17rem; letter-spacing: -.06rem; gap: .25rem; }
.type .down { width: .62rem; height: .4rem; color: #5e5e5e; }
.db { width: .8rem; height: 1.2rem; }
.cal { width: 1rem; height: 1.1rem; margin-right: .1rem; }

.box { height: 3.27rem; border: 1px solid #cfcfcf; border-radius: .3rem; background: #fff; padding: .1rem .35rem 0 .7rem; display: flex; align-items: center; font: 1.36rem/1.9rem "Open Sans", sans-serif; color: #000; white-space: nowrap; }
.box.soft { color: #4c4c4c; }
.box.empty { background: #fbfbfb; border-color: #ededed; }
.box.select .down { margin-left: auto; width: .5rem; height: .5rem; color: #9a9a9a; }
.box.area { height: 3.55rem; padding-bottom: .25rem; padding-right: .12rem; }
.grip { width: .7rem; height: .7rem; margin-left: auto; align-self: flex-end; color: #555; }

.item { height: 3.27rem; border: 1px solid #c9c9c9; border-left: .47rem solid var(--c); border-radius: .3rem; background: #fff; display: flex; align-items: center; padding-left: .38rem; font: 300 1.366rem/1.9rem "Open Sans", sans-serif; color: #444; white-space: nowrap; }
.item > span:last-child { margin-left: .64rem; }
.dots { flex: none; width: 1.06rem; height: 2.25rem; background: radial-gradient(circle at center, #b9b9b9 .11rem, transparent .18rem) 0 0 / .53rem .75rem; }
.chip { width: 2.35rem; height: 2.35rem; border-radius: 50%; background: var(--k); margin-left: .3rem; }
.chip.tf { font-size: .8rem; }
.item > .chip + span:last-child { margin-left: .4rem; }
.chev { width: 1.3rem; height: .8rem; margin-left: .85rem; color: #a8a8a8; }
.chev.amber { color: #f9b04f; }
.item > .chev + span:last-child { margin-left: .75rem; }
.items { display: flex; flex-direction: column; gap: .73rem; }
.item.ghost { opacity: .6; margin-top: -.1rem; height: 3.17rem; border-color: #e2e2e2 #e2e2e2 #cfcfcf var(--c); font-weight: 400; color: #6e6e6e; background: #fff; }
.item.ghost.nested { margin: -.5rem 0 .3rem 1rem; }

.sec { height: 2.33rem; display: flex; align-items: center; margin: 0 .9rem 0 -.65rem; font-size: 1.11rem; line-height: 1; color: #8c8c8c; white-space: nowrap; }
.sec::after { content: ""; flex: 1; margin: .5rem 0 0 .95rem; border-top: 1px dashed #dedede; }
.inputs { padding-bottom: 1.46rem; }
.inputs .sec:first-child { margin-bottom: .28rem; }

.call { padding-top: 0; }
h3 { font-size: 1.14rem; font-weight: 700; line-height: 1.4rem; color: #555; }
.call h3 { height: 3rem; padding-top: 1.66rem; margin-left: -.65rem; }
.call h3.second { height: 3.23rem; padding-top: 1.95rem; }

.outs { background: #eaebed; padding: 1.08rem 1.55rem 1.53rem 1.52rem; }
.outs.plain { background: #f9f9f9; padding-top: 1.04rem; }
.outs:has(.ghost) { padding-bottom: 1.16rem; }
.outs .sec { margin-left: -.6rem; }
.outs .sec::after { border-color: #ccc; }
.grouped { padding-top: .9rem; }
.grouped .sec { height: 2.45rem; padding-bottom: .3rem; }

.foot { height: 2.9rem; border-top: 1px solid #e6e6e6; background: #fff; display: flex; align-items: center; padding: 0 1rem 0 .92rem; color: #a9a9a9; }
.q { width: 1.3rem; height: 1.3rem; }
.run { width: 1.16rem; height: 1.3rem; margin-left: .87rem; }
.search { width: 1.36rem; height: 1.36rem; margin-left: auto; }
.gear { width: 1.3rem; height: 1.3rem; margin: -.15rem 0 0 .9rem; }
.pencil { width: 1.25rem; height: 1.25rem; margin-left: .95rem; }

.cond { height: 3.33rem; background: #fff; padding: .43rem .6rem .4rem; display: flex; gap: .6rem; }
.rule { flex: 1; background: #f2f3f8; border-radius: .2rem; display: flex; align-items: center; padding-left: .46rem; font-size: 1rem; white-space: nowrap; }
.rule em { color: #8c8c8c; margin-right: .65rem; }
.rule b { color: #4a4a4a; margin-right: .42rem; }
.edit { width: .9rem; height: .9rem; margin-left: .28rem; color: #a3a3a3; }
.create { width: 14.25rem; height: 2.42rem; background: #fff; border: 1px solid #92cb45; border-radius: .3rem; display: flex; align-items: center; justify-content: center; gap: .5rem; font-size: 1.31rem; color: #505050; white-space: nowrap; }
.create-icon { width: 1.1rem; height: 1.1rem; color: #80c42c; }
.options { font-size: 1.05rem; color: #5e5e5e; }
.opt { width: 1.3rem; height: 1.2rem; color: #999; margin-right: .6rem; }
.check { width: .8rem; height: .7rem; color: #7fc52e; margin-right: 1.05rem; }

.lane { display: flex; align-items: flex-start; }
.when-true { height: 29.9rem; background: #fdecd8; padding-top: 1.1rem; }
.when-true .card { box-shadow: 0 0 1rem rgba(120, 80, 20, .2); }
.when-false { height: 29.9rem; background: #f2f4fe; padding-top: 1.15rem; }
.when-false h3 { margin: .85rem 0 0 .22rem; }

.filter { display: flex; width: 100%; height: 3.5rem; align-items: center; justify-content: center; gap: .35rem; background: #fbae42; border: 1px solid #d9b27a; border-radius: .2rem; color: #fff; font-size: 1.2rem; font-weight: 700; }
.funnel { width: .95rem; height: 1.05rem; margin-top: .2rem; }

.note { width: 21.63rem; height: 16.13rem; background: #f7f7f7; font-family: Inter, sans-serif; }
.note-head { height: 3.3rem; background: #4fcf84; color: #fff; --mark: #4fcf84; display: flex; align-items: center; padding: 0 1.1rem 0 1rem; font: 1.27rem/1 Lato, sans-serif; }
.note-head span { margin: -.25rem 1rem 0 1.05rem; }
.note-head .q { width: 1.12rem; height: 1.12rem; margin-top: -.3rem; }
.note-head .x { margin-left: auto; width: .95rem; height: .95rem; }
.sheet { width: 1.2rem; height: 1.2rem; }
.note h4 { margin-top: .93rem; height: 3.45rem; padding-left: 1.12rem; background: #fff; border-bottom: 1px solid #f4f4f4; font-size: 1.36rem; line-height: 3.45rem; font-weight: 600; color: #1d1d21; }
.note p { height: 7.5rem; background: #fff; padding: .62rem 0 0 1.03rem; font-size: 1.212rem; line-height: 2.1rem; color: #1d1d21; white-space: nowrap; }
.note p.hint { color: #85858f; }

.next { flex: none; width: 22.33rem; margin-left: 2.87rem; display: flex; flex-direction: column; align-items: center; gap: .87rem; }
.drop { width: 100%; height: 34.06rem; border: 1px dashed #b5b5b7; background: #ebebed; display: flex; flex-direction: column; align-items: center; }
.next h5 { margin-top: 4.65rem; font-size: 1.545rem; line-height: 2rem; font-weight: 700; color: #66666f; }
.cta { flex: none; width: 11.95rem; height: 3.53rem; background: #fff; border: 1px solid #3f7fe4; border-radius: .25rem; color: #1662dd; font-size: 1.3rem; padding-bottom: .15rem; }
.next h5 + .cta { margin-top: 5.55rem; }
.or { height: 3.27rem; line-height: 3.1rem; font-size: 1.3rem; color: #66666f; }
.help { margin-top: 8.1rem; display: flex; align-items: center; gap: .42rem; font-size: 1.205rem; line-height: 1.6rem; color: #85858f; white-space: nowrap; }
.help .q { --mark: #ebebed; margin-top: -.2rem; }
```
